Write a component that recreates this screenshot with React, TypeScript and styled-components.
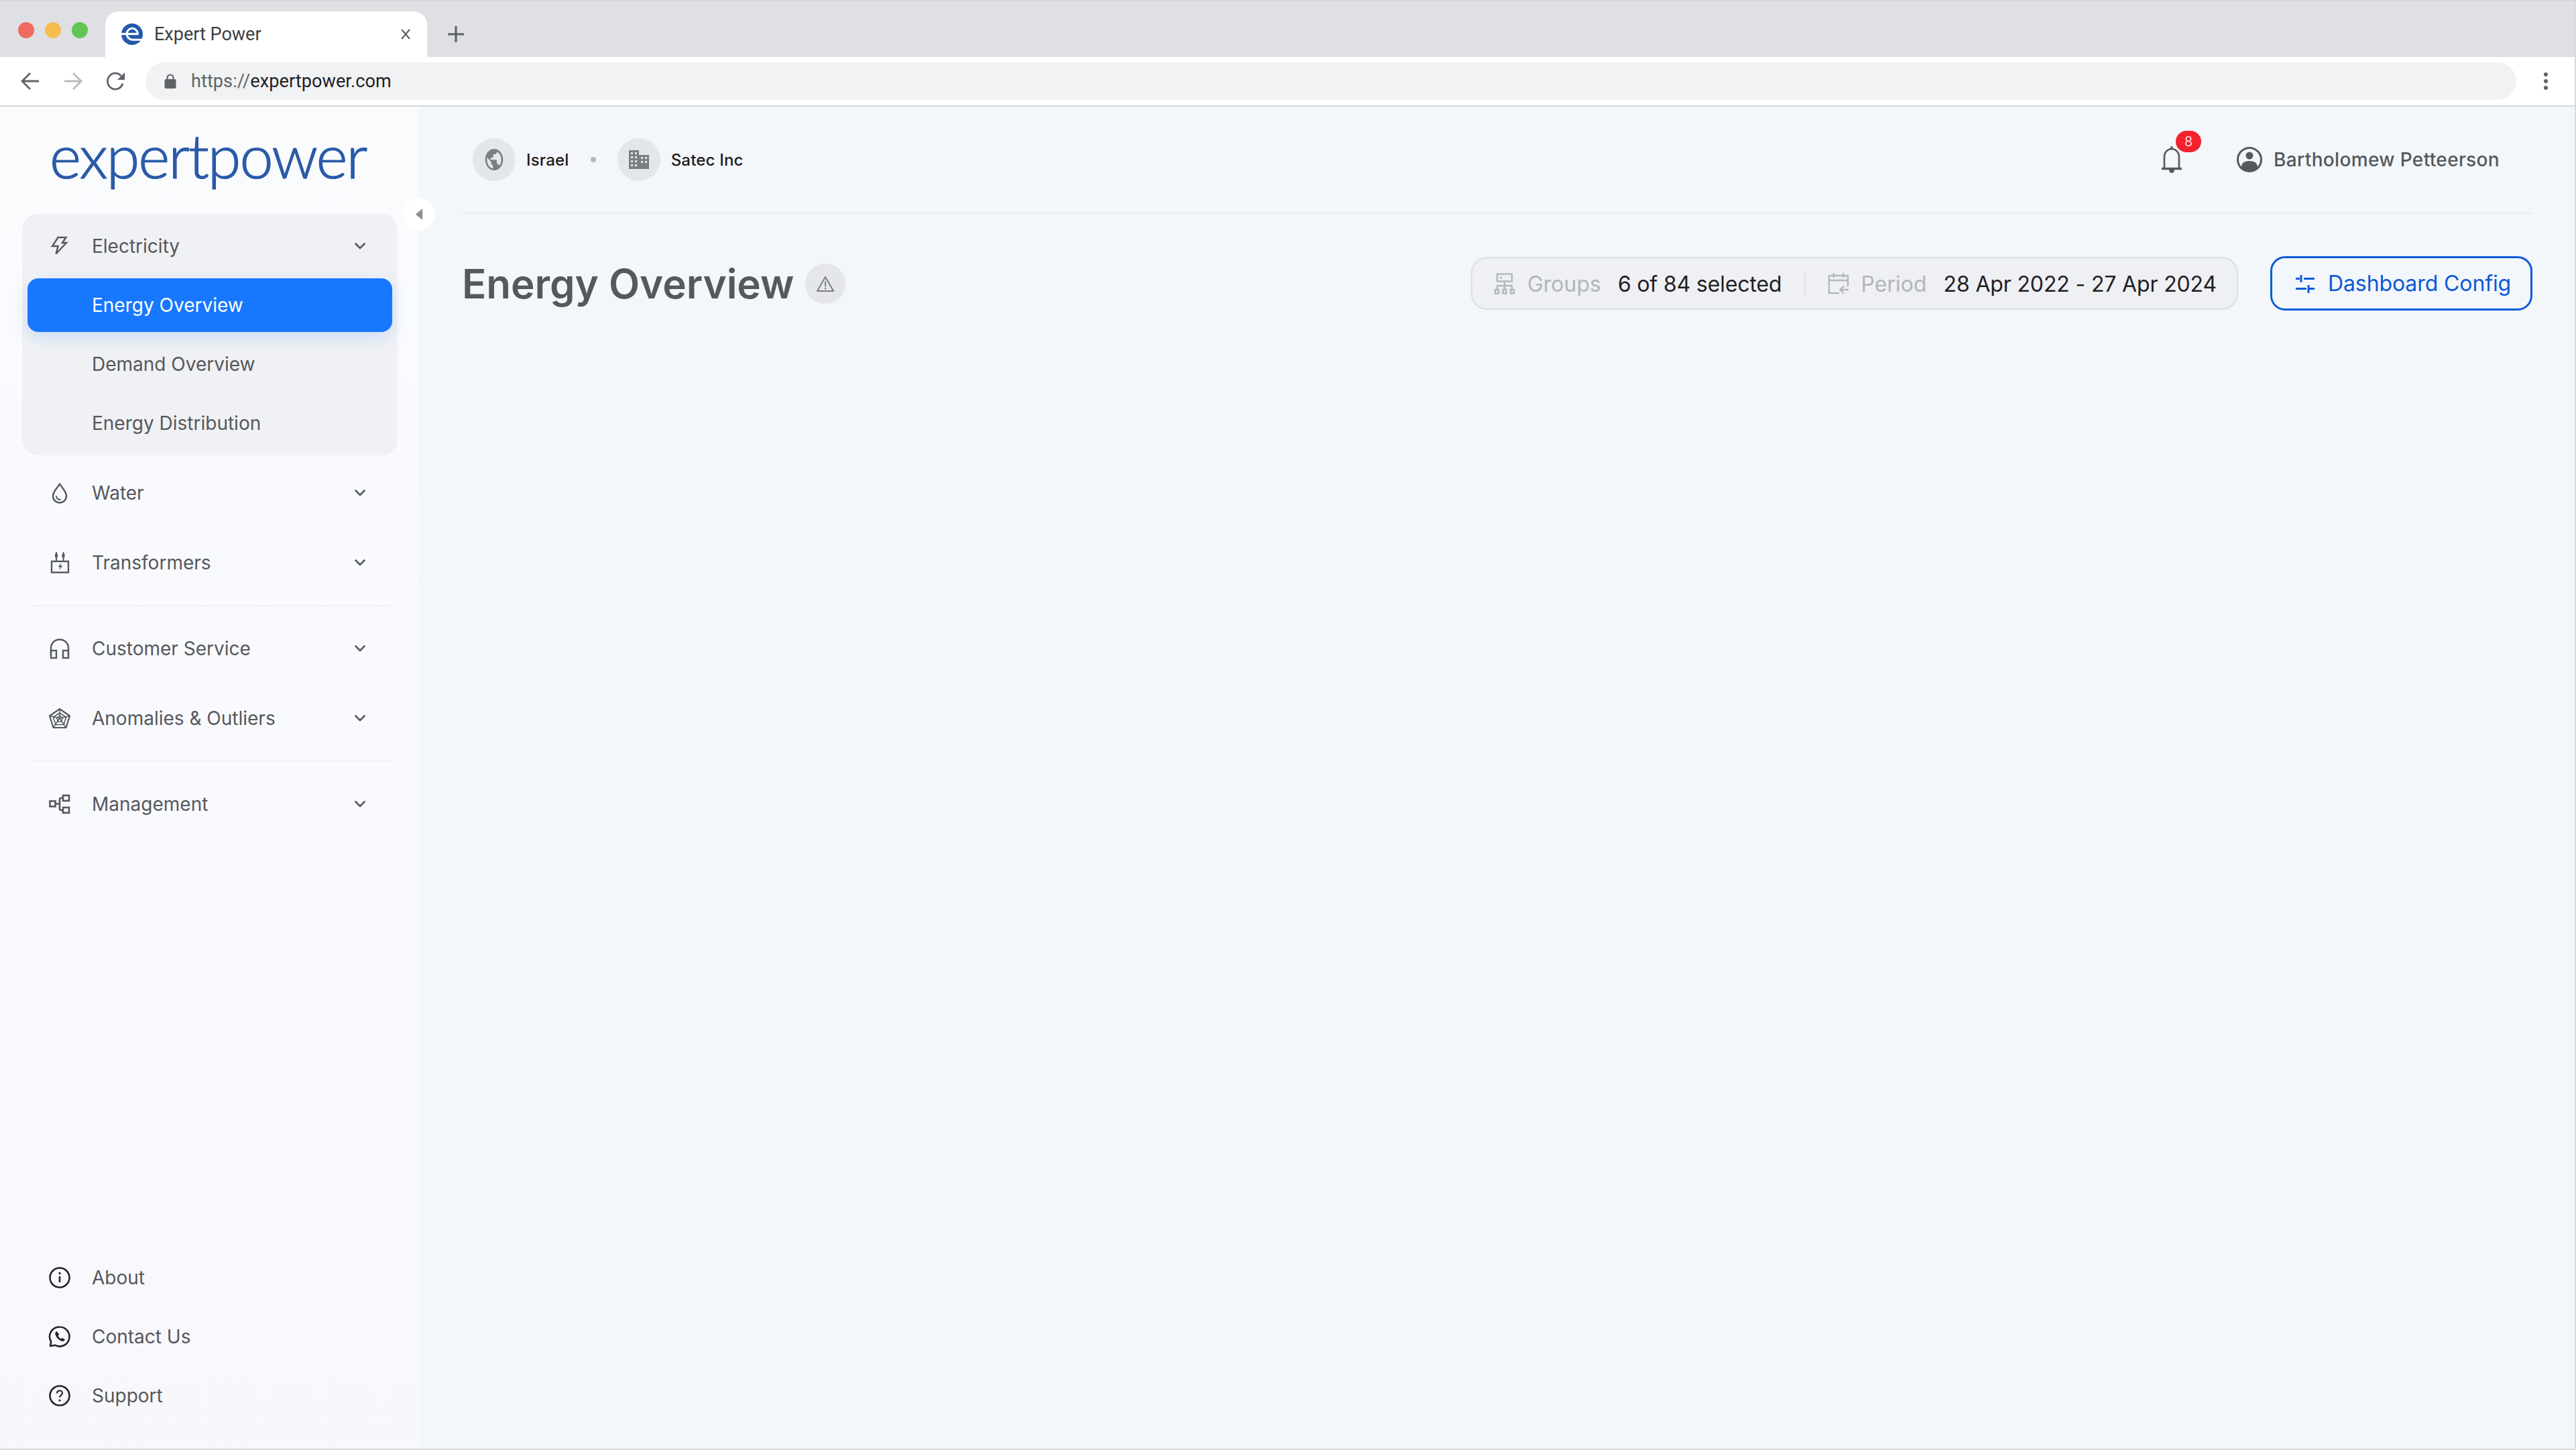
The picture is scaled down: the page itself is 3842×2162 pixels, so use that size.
import React from "react";
import styled, { createGlobalStyle } from "styled-components";

const GlobalStyle = createGlobalStyle`
  html, body, #root { margin: 0; height: 100%; }
  body { overflow: hidden; font-family: Inter, "Liberation Sans", sans-serif; }
`;

const Stroke = (props: React.SVGProps<SVGSVGElement>) => (
  <svg width={32} height={32} viewBox="0 0 32 32" fill="none" stroke="currentColor" strokeWidth={2.4} overflow="visible" {...props} />
);

const Chevron = () => (
  <svg width="16" height="10" viewBox="0 0 16 10" fill="none" stroke="currentColor" strokeWidth="2.6" strokeLinecap="round" strokeLinejoin="round">
    <path d="M1.5 1.5 8 8l6.5-6.5" />
  </svg>
);

const BoltIcon = () => (
  <Stroke strokeLinejoin="miter">
    <path d="M13.5 3H25.5L20 11h6L10.5 27.5 13.5 16H5z" />
  </Stroke>
);

const DropIcon = () => (
  <Stroke strokeLinejoin="round" strokeLinecap="round">
    <path d="M16 2.500C13 8 6 13.500 6 20.500a10 10 0 0 0 20 0C26 13.500 19 8 16 2.500z" />
    <path d="M11 21c.5 3 2.500 5 6 5" strokeWidth="1.800" />
  </Stroke>
);

const TransformerIcon = () => (
  <Stroke>
    <rect x="4" y="14" width="25" height="16.500" />
    <path d="M11 0v13M21.500 0v13" strokeWidth="2" />
    <path d="M9 3h4v5H9zM19.500 3h4v5h-4z" fill="currentColor" stroke="none" />
    <path d="M18.500 16l-5 6.500h3.500l-2 5 5.500-7h-3.500z" fill="currentColor" stroke="none" />
  </Stroke>
);

const HeadsetIcon = () => (
  <Stroke>
    <path d="M3 27V15a13 12.500 0 0 1 26 0v12" />
    <rect x="3" y="19" width="8" height="11" />
    <rect x="21" y="19" width="8" height="11" />
  </Stroke>
);

const RadarIcon = () => (
  <Stroke strokeWidth={2.2} strokeLinejoin="round">
    <path d="M16 2 31 12.500 25.500 30h-19L1 12.500z" />
    <path d="M16 8 25.500 14.500 22 25.500H10L6.500 14.500z" strokeWidth="1.600" />
    <path d="M16 2v14M31 12.500 16 16M25.500 30 16 16M6.500 30 16 16M1 12.500 16 16" strokeWidth="1.400" />
    <path d="M16 12l4.500 3.500L18.500 21h-5l-2-5.500z" strokeWidth="1.400" />
  </Stroke>
);

const TreeIcon = () => (
  <Stroke strokeWidth={2.6}>
    <rect x="1.500" y="11.500" width="8" height="8" />
    <rect x="21" y="3" width="9" height="8" />
    <rect x="21" y="21" width="9" height="8" />
    <path d="M10 15.500h6M16 7v18M16 7h5M16 25h5" />
  </Stroke>
);

const InfoIcon = () => (
  <Stroke strokeWidth={2.6}>
    <circle cx="16" cy="16" r="14.500" />
    <path d="M16 14v9" />
    <circle cx="16" cy="9.500" r="1.700" fill="currentColor" stroke="none" />
  </Stroke>
);

const ChatPhoneIcon = () => (
  <Stroke strokeWidth={2.6} strokeLinejoin="round">
    <path d="M16 1.500a14.500 14.500 0 1 1-7 27.200L2 30l1.200-6.500A14.500 14.500 0 0 1 16 1.500z" />
    <path d="M11.500 8c-1.800 1-2.500 2.500-2 4.500 1.200 4.700 5 8.800 9.800 10.300 2 .6 3.800-.3 4.700-2.300l-4-2.700-2 1.500c-2-1-3.500-2.800-4.300-4.800l1.600-2z" fill="currentColor" stroke="none" />
  </Stroke>
);

const HelpIcon = () => (
  <Stroke strokeWidth={2.6}>
    <circle cx="16" cy="16" r="14.500" />
    <path d="M12 12.500c0-2.500 1.800-4 4-4s4 1.500 4 3.700c0 3-4 3.300-4 6.300" strokeWidth="2.200" />
    <circle cx="16" cy="23" r="1.600" fill="currentColor" stroke="none" />
  </Stroke>
);

const GlobeIcon = () => (
  <svg width="30" height="36" viewBox="0 0 30 36" fill="currentColor">
    <path fillRule="evenodd" d="M15 0C6.700 0 0 8 0 18s6.700 18 15 18 15-8 15-18S23.300 0 15 0zM3 18c0-1.300.2-2.500.4-3.700L10 22v2c0 2 1.300 3.600 3 3.600V33C7.400 32 3 25.700 3 18zm21 10c-.4-1.500-1.600-2.600-3-2.600h-1.500V20c0-1-.7-1.800-1.500-1.800H9v-3.600h3c.8 0 1.500-.8 1.500-1.800V9H16.500c1.700 0 3-1.600 3-3.600v-.7C24 6.800 27 12 27 18c0 3.800-1.100 7.300-3 10z" />
  </svg>
);

const BuildingIcon = () => (
  <svg width="30" height="28" viewBox="0 0 30 28" fill="currentColor">
    <path fillRule="evenodd" d="M0 0h15v7h15v21H0zM3 3v3h3V3zm6 0v3h3V3zM3 9v3h3V9zm6 0v3h3V9zm9 1v3h3v-3zm6 0v3h3v-3zM3 15v3h3v-3zm6 0v3h3v-3zm9 1v3h3v-3zm6 0v3h3v-3zM3 21v3h3v-3zm6 0v3h3v-3z" />
  </svg>
);

const WarnIcon = () => (
  <svg width="28" height="24" viewBox="0 0 28 24" fill="none" stroke="currentColor" strokeWidth="2">
    <path d="M14 2 1.800 23h24.400z" strokeLinejoin="round" />
    <path d="M14 8.500v7.500" />
    <circle cx="14" cy="19" r="1.300" fill="currentColor" stroke="none" />
  </svg>
);

const GroupsIcon = () => (
  <svg width="32" height="32" viewBox="0 0 32 32" fill="none" stroke="currentColor" strokeWidth="2.400">
    <rect x="5" y="1.500" width="22" height="11" />
    <path d="M16 13v6M5 25v-6h22v6M16 19v6" />
    <rect x="2" y="25" width="5" height="5.500" />
    <rect x="13.500" y="25" width="5" height="5.500" />
    <rect x="25" y="25" width="5" height="5.500" />
    <path d="M9 7h3" />
  </svg>
);

const CalendarIcon = () => (
  <svg width="32" height="32" viewBox="0 0 32 32" fill="none" stroke="currentColor" strokeWidth="2.400">
    <path d="M17 30H2V4h28v16M2 11h28M9 0v7M23 0v7" />
    <path d="M31 25H19M24 19.500 18.500 25l5.500 5.500" />
  </svg>
);

const TuneIcon = () => (
  <svg width="28" height="28" viewBox="0 0 28 28" fill="none" stroke="currentColor" strokeWidth="3">
    <path d="M0 6.500h6M8 1v11M12 6.500h16M0 21.500h16M19 16v12M18 21.500h10" />
  </svg>
);

const BellIcon = () => (
  <svg width="32" height="40" viewBox="0 0 32 40" fill="none" stroke="currentColor" strokeWidth="2.600">
    <path d="M16 0v4" strokeWidth="3" />
    <path d="M5 32V16.500C5 9 10 4 16 4s11 5 11 12.500V32" />
    <path d="M1 33.500h30" strokeWidth="3.400" />
    <path d="M12 35h8c0 3-1.500 5-4 5s-4-2-4-5z" fill="currentColor" stroke="none" />
  </svg>
);

const UserIcon = () => (
  <svg width="38" height="38" viewBox="0 0 38 38">
    <circle cx="19" cy="19" r="17.500" fill="none" stroke="currentColor" strokeWidth="3" />
    <circle cx="19" cy="13" r="5.500" fill="currentColor" />
    <path d="M7 30c0-6 5-9 12-9s12 3 12 9c-3 4-7 6.500-12 6.500S10 34 7 30z" fill="currentColor" />
  </svg>
);

const Favicon = () => (
  <svg width="32" height="32" viewBox="0 0 32 32">
    <circle cx="16" cy="16" r="16" fill="#2358ab" />
    <path d="M0 14h25.500v3.200H0z" fill="#fff" />
    <path d="M8 15.500a8.200 8.200 0 0 1 16.400 0M8 15.500a8.500 8.700 0 0 0 8.500 8.700H32" fill="none" stroke="#fff" strokeWidth="3" />
  </svg>
);

export default function App() {
  return (
    <Frame>
      <GlobalStyle />
      <TabStrip>
        <Lights>
          <Light $color="#ef6a5f" />
          <Light $color="#f6bd4f" />
          <Light $color="#61c554" />
        </Lights>
        <Tab>
          <Favicon />
          <TabTitle>Expert Power</TabTitle>
          <TabClose viewBox="0 0 14 16" fill="none" stroke="currentColor" strokeWidth="2.200">
            <path d="M1 1l12 14M13 1 1 15" />
          </TabClose>
        </Tab>
        <NewTab viewBox="0 0 24 24" fill="none" stroke="currentColor" strokeWidth="3.200">
          <path d="M12 0v24M0 12h24" />
        </NewTab>
      </TabStrip>

      <Toolbar>
        <NavButtons>
          <svg width="28" height="26" viewBox="0 0 28 26" fill="none" stroke="#5f6368" strokeWidth="2.800">
            <path d="M27 13H3M14 1 2 13l12 12" />
          </svg>
          <svg width="28" height="26" viewBox="0 0 28 26" fill="none" stroke="#b9bbbe" strokeWidth="2.800">
            <path d="M1 13h24M14 1l12 12-12 12" />
          </svg>
          <svg width="28" height="28" viewBox="0 0 28 28" fill="none" stroke="#5f6368" strokeWidth="2.800">
            <path d="M24 17.500A11.500 12 0 1 1 21.500 6" />
            <path d="M27 1v11H16z" fill="#5f6368" stroke="none" />
          </svg>
        </NavButtons>
        <Omnibox>
          <svg width="18" height="22" viewBox="0 0 18 22">
            <rect x="0.500" y="8" width="17" height="14" rx="2" fill="#5f6368" />
            <path d="M4.500 9V6a4.500 4.500 0 0 1 9 0v3" fill="none" stroke="#5f6368" strokeWidth="2.200" />
          </svg>
          <Url>
            <UrlScheme>https://</UrlScheme>expertpower.com
          </Url>
        </Omnibox>
        <MenuDots>
          <i />
          <i />
          <i />
        </MenuDots>
      </Toolbar>

      <Body>
        <Sidebar>
          <Logo>expertpower</Logo>
          <CollapseHandle>
            <svg width="10" height="17" viewBox="0 0 10 17">
              <path d="M10 0v17L0 8.500z" fill="#8c8e91" />
            </svg>
          </CollapseHandle>

          <NavList>
            <OpenGroup>
              <NavRow>
                <NavIcon><BoltIcon /></NavIcon>
                <NavLabel>Electricity</NavLabel>
                <Chevron />
              </NavRow>
              <NavRow $sub $active>
                <NavLabel>Energy Overview</NavLabel>
              </NavRow>
              <NavRow $sub>
                <NavLabel>Demand Overview</NavLabel>
              </NavRow>
              <NavRow $sub>
                <NavLabel>Energy Distribution</NavLabel>
              </NavRow>
            </OpenGroup>

            <NavRow>
              <NavIcon><DropIcon /></NavIcon>
              <NavLabel>Water</NavLabel>
              <Chevron />
            </NavRow>
            <NavRow>
              <NavIcon><TransformerIcon /></NavIcon>
              <NavLabel>Transformers</NavLabel>
              <Chevron />
            </NavRow>
            <NavDivider />
            <NavRow>
              <NavIcon><HeadsetIcon /></NavIcon>
              <NavLabel>Customer Service</NavLabel>
              <Chevron />
            </NavRow>
            <NavRow>
              <NavIcon><RadarIcon /></NavIcon>
              <NavLabel>Anomalies &amp; Outliers</NavLabel>
              <Chevron />
            </NavRow>
            <NavDivider />
            <NavRow>
              <NavIcon><TreeIcon /></NavIcon>
              <NavLabel>Management</NavLabel>
              <Chevron />
            </NavRow>
          </NavList>

          <FootList>
            <NavRow>
              <NavIcon $dark><InfoIcon /></NavIcon>
              <NavLabel>About</NavLabel>
            </NavRow>
            <NavRow>
              <NavIcon $dark><ChatPhoneIcon /></NavIcon>
              <NavLabel>Contact Us</NavLabel>
            </NavRow>
            <NavRow>
              <NavIcon $dark><HelpIcon /></NavIcon>
              <NavLabel>Support</NavLabel>
            </NavRow>
          </FootList>
        </Sidebar>

        <Main>
          <TopBar>
            <Crumb>
              <CrumbBadge><GlobeIcon /></CrumbBadge>
              <CrumbLabel>Israel</CrumbLabel>
            </Crumb>
            <CrumbDot />
            <Crumb>
              <CrumbBadge><BuildingIcon /></CrumbBadge>
              <CrumbLabel>Satec Inc</CrumbLabel>
            </Crumb>
            <Bell>
              <BellIcon />
              <BellBadge>8</BellBadge>
            </Bell>
            <UserChip>
              <UserIcon />
              <UserName>Bartholomew Petteerson</UserName>
            </UserChip>
          </TopBar>

          <PageHead>
            <Title>Energy Overview</Title>
            <WarnBadge><WarnIcon /></WarnBadge>
            <FilterBox>
              <Filter>
                <GroupsIcon />
                <FilterLabel>Groups</FilterLabel>
                <FilterValue>6 of 84 selected</FilterValue>
              </Filter>
              <FilterSep />
              <Filter>
                <CalendarIcon />
                <FilterLabel>Period</FilterLabel>
                <FilterValue>28 Apr 2022 - 27 Apr 2024</FilterValue>
              </Filter>
            </FilterBox>
            <ConfigButton>
              <TuneIcon />
              Dashboard Config
            </ConfigButton>
          </PageHead>
        </Main>
      </Body>
    </Frame>
  );
}

// #region Styles

const Frame = styled.div`
  display: flex;
  flex-direction: column;
  width: 3842px;
  height: 2162px;
  box-sizing: border-box;
  border-right: 2px solid #d9dadc;
  border-bottom: 2px solid #d9dadc;
  overflow: hidden;
`;

const TabStrip = styled.div`
  display: flex;
  align-items: flex-end;
  flex-shrink: 0;
  height: 85px;
  box-sizing: border-box;
  border-top: 2px solid #d4d6d8;
  background: #dfe0e4;
`;

const Lights = styled.div`
  display: flex;
  gap: 16px;
  align-self: flex-start;
  padding: 31px 26px 0 27px;
`;

const Light = styled.span<{ $color: string }>`
  width: 24px;
  height: 24px;
  border-radius: 50%;
  background: ${(p) => p.$color};
`;

const Tab = styled.div`
  display: flex;
  align-items: center;
  width: 480px;
  height: 68px;
  box-sizing: border-box;
  padding: 0 25px 0 24px;
  border-radius: 20px 20px 0 0;
  background: #fff;
  color: #3c4043;
`;

const TabTitle = styled.span`
  flex: 1;
  margin-left: 17px;
  font-size: 27px;
  font-family: Roboto, sans-serif;
`;

const TabClose = styled.svg`
  width: 14px;
  height: 16px;
  color: #5f6368;
`;

const NewTab = styled.svg`
  width: 24px;
  height: 24px;
  margin: 0 0 22px 31px;
  color: #5f6368;
`;

const Toolbar = styled.div`
  display: flex;
  align-items: center;
  flex-shrink: 0;
  height: 74px;
  box-sizing: border-box;
  border-bottom: 2px solid #d8d8d8;
  background: #fff;
`;

const NavButtons = styled.div`
  display: flex;
  align-items: center;
  gap: 36px;
  width: 217px;
  box-sizing: border-box;
  padding-left: 31px;
`;

const Omnibox = styled.div`
  display: flex;
  align-items: center;
  gap: 22px;
  width: 3536px;
  height: 56px;
  box-sizing: border-box;
  padding-left: 28px;
  border-radius: 28px;
  background: #f1f2f4;
`;

const Url = styled.span`
  font-family: Roboto, sans-serif;
  font-size: 27px;
  letter-spacing: 0.1px;
  color: #202124;
`;

const UrlScheme = styled.span`
  color: #5f6368;
`;

const MenuDots = styled.div`
  display: flex;
  flex-direction: column;
  gap: 4px;
  margin-left: 41px;

  i {
    width: 6px;
    height: 6px;
    border-radius: 50%;
    background: #5f6368;
  }
`;

const Body = styled.div`
  display: flex;
  flex: 1;
  min-height: 0;
`;

const Sidebar = styled.aside`
  position: relative;
  display: flex;
  flex-direction: column;
  flex-shrink: 0;
  width: 625px;
  box-sizing: border-box;
  padding: 0 40px 39px 41px;
  background: linear-gradient(180deg, #f9fbfd, #f8f8fc);
`;

const Logo = styled.div`
  display: flex;
  align-items: center;
  flex-shrink: 0;
  height: 160px;
  padding: 0 0 17px 33px;
  box-sizing: border-box;
  font-family: Lato, sans-serif;
  font-weight: 300;
  font-size: 90px;
  letter-spacing: -2px;
  color: #2a5aa8;
  -webkit-text-stroke: 1.2px #2a5aa8;
`;

const CollapseHandle = styled.button`
  position: absolute;
  top: 136px;
  left: 601px;
  display: flex;
  align-items: center;
  justify-content: center;
  width: 48px;
  height: 48px;
  padding: 0;
  border: none;
  border-radius: 50%;
  background: #fff;
`;

const NavList = styled.nav`
  display: flex;
  flex-direction: column;
  gap: 24px;
`;

const OpenGroup = styled.div`
  display: flex;
  flex-direction: column;
  gap: 8px;
  margin: 0 -8px -8px;
  padding: 8px;
  border-radius: 24px;
  background: #f0f1f4;
`;

const NavRow = styled.div<{ $sub?: boolean; $active?: boolean }>`
  display: flex;
  align-items: center;
  gap: 32px;
  height: 80px;
  box-sizing: border-box;
  padding: 0 40px 0 ${(p) => (p.$sub ? "96px" : "32px")};
  border-radius: 16px;
  color: ${(p) => (p.$active ? "#fff" : "#55585c")};
  background: ${(p) => (p.$active ? "#1877ff" : "transparent")};
  box-shadow: ${(p) => (p.$active ? "0 8px 24px rgba(24, 119, 255, 0.16)" : "none")};
`;

const NavIcon = styled.span<{ $dark?: boolean }>`
  display: flex;
  flex-shrink: 0;
  width: 32px;
  height: 32px;
  color: ${(p) => (p.$dark ? "#222426" : "#55585c")};
`;

const NavLabel = styled.span`
  flex: 1;
  font-size: 28px;
  line-height: 1;
`;

const NavDivider = styled.hr`
  width: 100%;
  height: 2px;
  margin: -1px 0;
  border: none;
  background: #f1f2f5;
`;

const FootList = styled.div`
  display: flex;
  flex-direction: column;
  gap: 8px;
  margin-top: auto;
`;

const Main = styled.main`
  display: flex;
  flex: 1;
  flex-direction: column;
  min-width: 0;
  padding: 0 63px 0 64px;
  background: #f3f6fa;
`;

const TopBar = styled.header`
  display: flex;
  align-items: center;
  flex-shrink: 0;
  height: 160px;
  box-sizing: border-box;
  padding: 0 49px 0 16px;
  border-bottom: 2px solid #e9ecef;
`;

const Crumb = styled.div`
  display: flex;
  align-items: center;
  gap: 16px;
`;

const CrumbBadge = styled.span`
  display: flex;
  align-items: center;
  justify-content: center;
  width: 64px;
  height: 64px;
  border-radius: 50%;
  background: #e4e7ea;
  color: #7b7e82;

  svg {
    height: 32px;
  }
`;

const CrumbLabel = styled.span`
  font-size: 24px;
  font-weight: 500;
  letter-spacing: 0.2px;
  color: #1c1c1e;
`;

const CrumbDot = styled.span`
  width: 8px;
  height: 8px;
  margin: 0 32px;
  border-radius: 50%;
  background: #b4b7bb;
`;

const Bell = styled.div`
  position: relative;
  display: flex;
  margin-left: auto;
  color: #55585c;
`;

const BellBadge = styled.span`
  position: absolute;
  top: -23px;
  left: 22px;
  display: flex;
  align-items: center;
  justify-content: center;
  width: 38px;
  height: 32px;
  border-radius: 16px;
  background: #f5222d;
  color: #fff;
  font-size: 20px;
  font-weight: 300;
`;

const UserChip = styled.div`
  display: flex;
  align-items: center;
  gap: 17px;
  margin-left: 81px;
  color: #55585c;
`;

const UserName = styled.span`
  font-size: 28px;
  font-weight: 500;
  letter-spacing: 0.35px;
`;

const PageHead = styled.section`
  display: flex;
  align-items: center;
  height: 81px;
  margin-top: 63px;
`;

const Title = styled.h1`
  margin: 0;
  font-size: 60px;
  font-weight: 600;
  color: #55585c;
`;

const WarnBadge = styled.span`
  display: flex;
  align-items: center;
  justify-content: center;
  width: 60px;
  height: 60px;
  margin-left: 17px;
  border-radius: 50%;
  background: #e4e6e9;
  color: #7b7e82;
`;

const FilterBox = styled.div`
  display: flex;
  align-items: center;
  height: 79px;
  box-sizing: border-box;
  margin-left: auto;
  padding: 1px 30px 0 32px;
  border: 2px solid #dcdfe2;
  border-radius: 24px;
  background: #eef0f4;
`;

const Filter = styled.div`
  display: flex;
  align-items: center;
  color: #b3b6ba;
`;

const FilterLabel = styled.span`
  margin: 0 25px 0 18px;
  font-size: 32px;
`;

const FilterValue = styled.span`
  font-size: 32px;
  letter-spacing: -0.15px;
  color: #1f2023;
`;

const FilterSep = styled.span`
  width: 2px;
  height: 36px;
  margin: 0 33px;
  background: #e0e2e6;
`;

const ConfigButton = styled.button`
  display: flex;
  align-items: center;
  gap: 20px;
  width: 391px;
  height: 81px;
  box-sizing: border-box;
  margin-left: 48px;
  padding: 0 0 0 35px;
  border: 3px solid #0a5bd8;
  border-radius: 22px;
  background: transparent;
  color: #0c5ad6;
  font-family: inherit;
  font-size: 32px;
  letter-spacing: -0.1px;
`;

// #endregion
